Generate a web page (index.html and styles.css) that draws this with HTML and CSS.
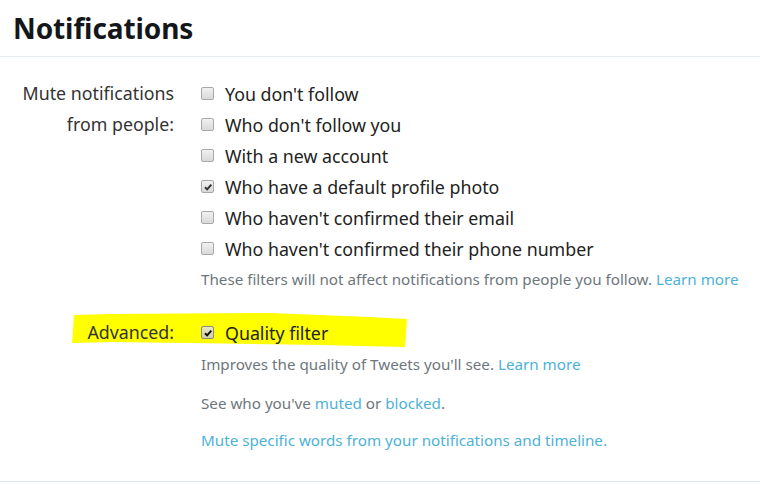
FILE: index.html
```html
<!DOCTYPE html>
<html>
<head>
<meta charset="utf-8">
<link rel="stylesheet" href="styles.css">
</head>
<body>
<div class="page">
  <header class="head"><h1 class="title">Notifications</h1></header>
  <section class="body">
    <div class="row">
      <div class="label">Mute notifications<br>from people:</div>
      <div class="controls">
        <label class="opt"><span class="box"></span>You don't follow</label>
        <label class="opt"><span class="box"></span>Who don't follow you</label>
        <label class="opt"><span class="box"></span>With a new account</label>
        <label class="opt"><span class="box checked"><svg viewBox="0 0 10 10"><path d="M2 5.2 L4.2 7.4 L8.3 2.6" /></svg></span>Who have a default profile photo</label>
        <label class="opt"><span class="box"></span>Who haven't confirmed their email</label>
        <label class="opt"><span class="box"></span>Who haven't confirmed their phone number</label>
        <p class="note">These filters will not affect notifications from people you follow. <a class="link">Learn more</a></p>
      </div>
    </div>
    <div class="row adv">
      <svg class="marker" viewBox="0 0 340 36" preserveAspectRatio="none"><path d="M2 3 L40 2 L200 1 L300 5 L338 7 L336 35 L250 33 L120 31 L40 30 L0 31 Z"/></svg>
      <div class="label">Advanced:</div>
      <div class="controls">
        <label class="opt"><span class="box checked dark"><svg viewBox="0 0 10 10"><path d="M2 5.2 L4.2 7.4 L8.3 2.6" /></svg></span>Quality filter</label>
        <p class="note first">Improves the quality of Tweets you'll see. <a class="link">Learn more</a></p>
        <p class="note gap">See who you've <a class="link">muted</a> or <a class="link">blocked</a>.</p>
        <p class="note gap2"><a class="link">Mute specific words from your notifications and timeline.</a></p>
      </div>
    </div>
  </section>
</div>
</body>
</html>
```
FILE: styles.css
```css
html, body { margin: 0; padding: 0; background: #fff; }
body { font-family: "Noto Sans", "Open Sans", sans-serif; color: #292f33; }
.page { width: 760px; height: 494px; overflow: hidden; }
.head { height: 57px; border-bottom: 1px solid #e6ecf0; box-sizing: border-box; padding: 10px 0 0 13px; }
.title { margin: 0; font-size: 28px; font-weight: 700; color: #14171a; line-height: 36px; letter-spacing: -0.1px; }
.body { border-bottom: 1px solid #e1e8ed; padding: 21px 0 0; height: 425px; box-sizing: border-box; }
.row { display: grid; grid-template-columns: 174px 1fr; column-gap: 27px; position: relative; }
.label { text-align: right; font-size: 17.8px; line-height: 31px; color: #333; }
.controls { display: flex; flex-direction: column; }
.opt { display: flex; align-items: center; height: 31px; font-size: 17.8px; color: #222; }
.box { width: 13px; height: 13px; box-sizing: border-box; border: 1px solid #a9a9a9; border-radius: 2px; background: linear-gradient(#f1f1f1, #d9d9d9); margin-right: 11px; display: flex; align-items: center; justify-content: center; flex: none; }
.box svg { width: 10px; height: 10px; fill: none; stroke: #333; stroke-width: 2; }
.box.dark { border-color: #8d8d70; background: linear-gradient(#e8e8c8, #cfcfa8); }
.box.dark svg { stroke: #111; }
.note { margin: 0; font-size: 15.2px; line-height: 31px; color: #6e767d; }
.link { color: #4db2d6; text-decoration: none; cursor: pointer; }
.adv { margin-top: 22px; }
.first { margin-top: 1px; }
.gap { margin-top: 8px; }
.gap2 { margin-top: 6px; }
.marker { position: absolute; left: 72px; top: -5px; width: 337px; height: 36px; z-index: 0; }
.marker path { fill: #ffff00; }
.adv .label, .adv .controls { position: relative; z-index: 1; }
```
